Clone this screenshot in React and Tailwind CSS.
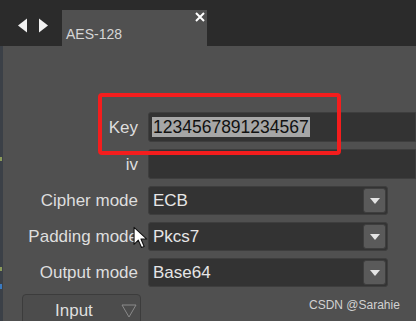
import React from "react";

const selects = [
  { label: "Cipher mode", value: "ECB" },
  { label: "Padding mode", value: "Pkcs7" },
  { label: "Output mode", value: "Base64" },
];

function DropButton() {
  return (
    <div className="w-[23px] h-full bg-[#5a5a5a] border border-[#3e3e3e] rounded-[3px] flex items-center justify-center">
      <svg width="12" height="8" viewBox="0 0 12 8">
        <path d="M1 1 L11 1 L6 7 Z" fill="#e4e4e4" />
      </svg>
    </div>
  );
}

function Row({ label, children, h = "h-[30px]" }) {
  return (
    <div className={`flex items-center ${h}`}>
      <div className="w-[134px] text-right text-[17px] text-[#dedede] leading-none whitespace-nowrap">
        {label}
      </div>
      <div className="ml-[10px] flex-1 h-full">{children}</div>
    </div>
  );
}

export default function App() {
  return (
    <div
      className="relative w-[416px] h-[321px] overflow-hidden bg-[#505050]"
      style={{ fontFamily: '"Liberation Sans", Arial, sans-serif' }}
    >
      {/* title / tab bar */}
      <div className="h-[46px] bg-[#2b2b2b] flex">
        <div className="w-[62px] pl-[17px] pt-[18px] flex gap-[10px]">
          <svg width="11" height="15" viewBox="0 0 11 15">
            <path d="M10 0.5 L10 14.5 L1 7.5 Z" fill="#f2f2f2" />
          </svg>
          <svg width="11" height="15" viewBox="0 0 11 15">
            <path d="M1 0.5 L1 14.5 L10 7.5 Z" fill="#f2f2f2" />
          </svg>
        </div>
        <div className="relative mt-[10px] w-[145px] h-[36px] bg-[#505050] pl-[4px] pt-[12px]">
          <span className="text-[14px] leading-[16px] text-[#d6d6d6]">AES-128</span>
          <svg className="absolute right-[2px] top-[2px]" width="10" height="10" viewBox="0 0 10 10">
            <path d="M1 1 L9 9 M9 1 L1 9" stroke="#ffffff" strokeWidth="2" />
          </svg>
        </div>
      </div>

      {/* body */}
      <div className="flex">
        <div className="w-[3px] h-[275px] bg-[#3b4047] relative">
          <div className="absolute top-[111px] left-0 w-[2px] h-[4px] bg-[#8a9a5a]" />
          <div className="absolute top-[221px] left-0 w-[2px] h-[4px] bg-[#8a9a5a]" />
          <div className="absolute top-[238px] left-0 w-[2px] h-[5px] bg-[#3a7ac0]" />
        </div>
        <div className="flex-1 pl-[1px] pt-[66px] flex flex-col gap-[7px]">
          <Row label="Key">
            <div className="h-full bg-[#333333] border border-[#3e3e3e] rounded-l-[3px] flex items-center pl-[3px]">
              <span className="bg-[#a6a6a6] text-[#111] text-[17.5px] leading-[20px] px-[1px]">
                1234567891234567
              </span>
            </div>
          </Row>
          <Row label="iv">
            <div className="h-full bg-[#333333] border border-[#3e3e3e] rounded-l-[3px]" />
          </Row>
          {selects.map((s) => (
            <Row key={s.label} label={s.label} h="h-[29px]">
              <div className="w-[240px] h-full bg-[#333333] border border-[#3e3e3e] rounded-[3px] flex items-stretch p-[1px]">
                <div className="flex-1 flex items-center pl-[3px] text-[17px] text-[#e6e6e6]">
                  {s.value}
                </div>
                <DropButton />
              </div>
            </Row>
          ))}
          <div className="pl-[18px]">
            <div className="w-[119px] h-[34px] bg-[#4c4c4c] border border-[#3c3c3c] rounded-t-[4px] flex items-center pl-[32px]">
              <span className="text-[17px] text-[#dedede]">Input</span>
              <svg className="ml-[28px]" width="16" height="14" viewBox="0 0 16 14">
                <path d="M1 1 L15 1 L8 13 Z" fill="none" stroke="#8a8a8a" strokeWidth="1" />
              </svg>
            </div>
          </div>
        </div>
      </div>

      {/* red annotation box */}
      <div className="absolute left-[98px] top-[93px] w-[243px] h-[62px] border-[4px] border-[#f41d1d] rounded-[4px]" />

      {/* mouse cursor */}
      <svg className="absolute left-[133px] top-[226px]" width="17" height="24" viewBox="0 0 16 22">
        <path
          d="M1 1 L1 17 L5 13 L8 20 L10.5 19 L7.5 12 L13 12 Z"
          fill="#ffffff"
          stroke="#111"
          strokeWidth="1"
          strokeLinejoin="round"
        />
      </svg>

      {/* watermark */}
      <div className="absolute left-[309px] top-[298px] text-[12px] text-[#d2d2d2] leading-[14px]">
        CSDN @Sarahie
      </div>
    </div>
  );
}
